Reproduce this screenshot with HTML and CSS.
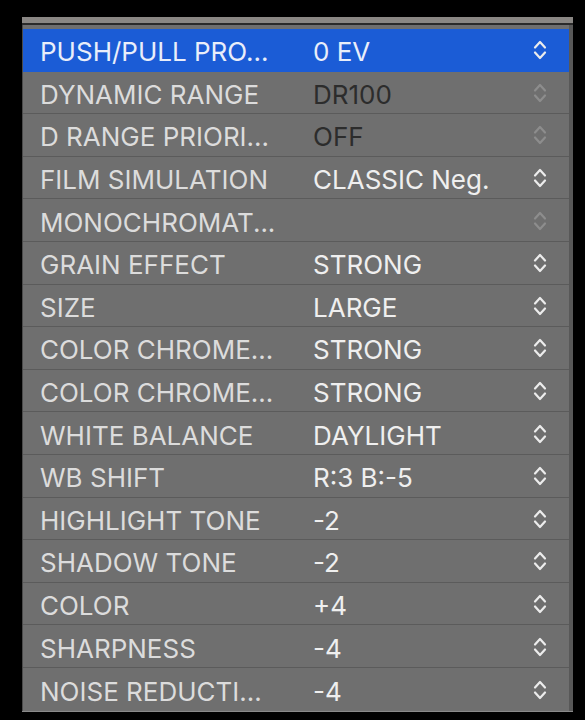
FILE: index.html
```html
<!DOCTYPE html>
<html lang="en">

<head>
    <meta charset="UTF-8">
    <title>Recipe Settings</title>
    <link rel="stylesheet" href="styles.css">
</head>

<body>
    <div class="panel">
        <div class="top-bar"></div>
        <div class="top-line"></div>
        <div class="list">
            <div class="row selected">
                <span class="label">PUSH/PULL PRO...</span>
                <span class="value">0 EV</span>
                <svg class="updown" viewBox="0 0 14 22"><path d="M2 8.5 L7 3 L12 8.5 M2 13.5 L7 19 L12 13.5"/></svg>
            </div>
            <div class="row disabled">
                <span class="label">DYNAMIC RANGE</span>
                <span class="value">DR100</span>
                <svg class="updown" viewBox="0 0 14 22"><path d="M2 8.5 L7 3 L12 8.5 M2 13.5 L7 19 L12 13.5"/></svg>
            </div>
            <div class="row disabled">
                <span class="label">D RANGE PRIORI...</span>
                <span class="value">OFF</span>
                <svg class="updown" viewBox="0 0 14 22"><path d="M2 8.5 L7 3 L12 8.5 M2 13.5 L7 19 L12 13.5"/></svg>
            </div>
            <div class="row">
                <span class="label">FILM SIMULATION</span>
                <span class="value">CLASSIC Neg.</span>
                <svg class="updown" viewBox="0 0 14 22"><path d="M2 8.5 L7 3 L12 8.5 M2 13.5 L7 19 L12 13.5"/></svg>
            </div>
            <div class="row disabled">
                <span class="label">MONOCHROMAT...</span>
                <span class="value"></span>
                <svg class="updown" viewBox="0 0 14 22"><path d="M2 8.5 L7 3 L12 8.5 M2 13.5 L7 19 L12 13.5"/></svg>
            </div>
            <div class="row">
                <span class="label">GRAIN EFFECT</span>
                <span class="value">STRONG</span>
                <svg class="updown" viewBox="0 0 14 22"><path d="M2 8.5 L7 3 L12 8.5 M2 13.5 L7 19 L12 13.5"/></svg>
            </div>
            <div class="row">
                <span class="label">SIZE</span>
                <span class="value">LARGE</span>
                <svg class="updown" viewBox="0 0 14 22"><path d="M2 8.5 L7 3 L12 8.5 M2 13.5 L7 19 L12 13.5"/></svg>
            </div>
            <div class="row">
                <span class="label">COLOR CHROME...</span>
                <span class="value">STRONG</span>
                <svg class="updown" viewBox="0 0 14 22"><path d="M2 8.5 L7 3 L12 8.5 M2 13.5 L7 19 L12 13.5"/></svg>
            </div>
            <div class="row">
                <span class="label">COLOR CHROME...</span>
                <span class="value">STRONG</span>
                <svg class="updown" viewBox="0 0 14 22"><path d="M2 8.5 L7 3 L12 8.5 M2 13.5 L7 19 L12 13.5"/></svg>
            </div>
            <div class="row">
                <span class="label">WHITE BALANCE</span>
                <span class="value">DAYLIGHT</span>
                <svg class="updown" viewBox="0 0 14 22"><path d="M2 8.5 L7 3 L12 8.5 M2 13.5 L7 19 L12 13.5"/></svg>
            </div>
            <div class="row">
                <span class="label">WB SHIFT</span>
                <span class="value">R:3 B:-5</span>
                <svg class="updown" viewBox="0 0 14 22"><path d="M2 8.5 L7 3 L12 8.5 M2 13.5 L7 19 L12 13.5"/></svg>
            </div>
            <div class="row">
                <span class="label">HIGHLIGHT TONE</span>
                <span class="value">-2</span>
                <svg class="updown" viewBox="0 0 14 22"><path d="M2 8.5 L7 3 L12 8.5 M2 13.5 L7 19 L12 13.5"/></svg>
            </div>
            <div class="row">
                <span class="label">SHADOW TONE</span>
                <span class="value">-2</span>
                <svg class="updown" viewBox="0 0 14 22"><path d="M2 8.5 L7 3 L12 8.5 M2 13.5 L7 19 L12 13.5"/></svg>
            </div>
            <div class="row">
                <span class="label">COLOR</span>
                <span class="value">+4</span>
                <svg class="updown" viewBox="0 0 14 22"><path d="M2 8.5 L7 3 L12 8.5 M2 13.5 L7 19 L12 13.5"/></svg>
            </div>
            <div class="row">
                <span class="label">SHARPNESS</span>
                <span class="value">-4</span>
                <svg class="updown" viewBox="0 0 14 22"><path d="M2 8.5 L7 3 L12 8.5 M2 13.5 L7 19 L12 13.5"/></svg>
            </div>
            <div class="row">
                <span class="label">NOISE REDUCTI...</span>
                <span class="value">-4</span>
                <svg class="updown" viewBox="0 0 14 22"><path d="M2 8.5 L7 3 L12 8.5 M2 13.5 L7 19 L12 13.5"/></svg>
            </div>
        </div>
        <div class="bottom-line"></div>
    </div>
</body>

</html>
```

FILE: styles.css
```css
body {
    margin: 0;
    background: #000;
    font-family: Inter, "Liberation Sans", sans-serif;
}

.panel {
    width: 551px;
    margin: 17px 0 0 22px;
}

.top-bar {
    height: 6px;
    background: #8a8784;
}

.top-line {
    height: 2px;
    background: #2a2a2a;
}

.list {
    background: #6f6f6f;
    border-left: 1px solid #4a4a4a;
    border-right: 4px solid #585858;
    padding-top: 4px;
}

.row {
    display: grid;
    grid-template-columns: 273px 1fr 14px;
    align-items: center;
    box-sizing: border-box;
    height: 42.6px;
    padding: 4px 22px 0 17px;
    border-bottom: 1.5px solid #5b5b5b;
    font-size: 26px;
}

.row:last-child {
    border-bottom: none;
}

.label {
    color: #dcdcdc;
    white-space: nowrap;
}

.value {
    color: #efefef;
    white-space: nowrap;
}

.updown {
    width: 14px;
    height: 22px;
    margin-top: -3px;
    fill: none;
    stroke: #ececec;
    stroke-width: 2.2;
    stroke-linecap: round;
    stroke-linejoin: round;
}

.selected {
    background: #1b5cd6;
    border-bottom-color: #1b5cd6;
}

.selected .label,
.selected .value {
    color: #e9eefa;
}

.disabled .value {
    color: #2c2c2c;
}

.disabled .updown {
    stroke: #8d8d8d;
}

.bottom-line {
    height: 1px;
    background: #8a8a8a;
}
```
